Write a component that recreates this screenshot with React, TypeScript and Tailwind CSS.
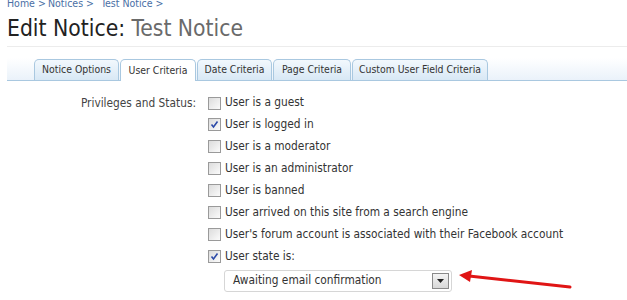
import React from "react";

const options = [
  { label: "User is a guest", checked: false },
  { label: "User is logged in", checked: true },
  { label: "User is a moderator", checked: false },
  { label: "User is an administrator", checked: false },
  { label: "User is banned", checked: false },
  { label: "User arrived on this site from a search engine", checked: false },
  { label: "User's forum account is associated with their Facebook account", checked: false },
  { label: "User state is:", checked: true },
];

const tabs = [
  { label: "Notice Options", w: "w-[85px]" },
  { label: "User Criteria", w: "w-[76px]" },
  { label: "Date Criteria", w: "w-[75px]" },
  { label: "Page Criteria", w: "w-[78px]" },
  { label: "Custom User Field Criteria", w: "w-[136px]" },
];

const CheckBox = ({ checked }: { checked: boolean }) => (
  <span className="w-[13px] h-[13px] shrink-0 border border-[#9a9a9a] bg-gradient-to-br from-[#dcdcdc] to-[#fbfbfb] flex items-center justify-center">
    {checked && (
      <svg width="9" height="9" viewBox="0 0 9 9">
        <path d="M1.5 4.5 L3.5 7 L7.5 1.5" fill="none" stroke="#2c4aa8" strokeWidth="1.6" />
      </svg>
    )}
  </span>
);

export default function App() {
  return (
    <div
      className="relative w-[627px] h-[300px] overflow-hidden bg-white text-[#333]"
      style={{ fontFamily: "'DejaVu Sans Condensed', 'DejaVu Sans', sans-serif" }}
    >
      <div className="pl-[7px] mt-[-3px] text-[10.5px] leading-[13px] text-[#4a6fa5] flex">
        <span className="w-[41px]">Home &gt;</span>
        <span className="w-[53px]">Notices &gt;</span>
        <span>Test Notice &gt;</span>
      </div>

      <h1 className="pl-[7px] mt-[4px] text-[22.7px] leading-[28px] text-[#222]">
        Edit Notice: <span className="text-[#6a6a6a]">Test Notice</span>
      </h1>

      <div className="ml-[7px] mt-[4px] h-px bg-[#ececec]" />

      <div className="ml-[7px] mt-[11px] h-[23px] pl-[27px] flex items-end gap-[1px] border-b border-[#a9c8e0] bg-gradient-to-b from-white to-[#eaf2fa]">
        {tabs.map((t) => (
          <div
            key={t.label}
            className={
              t.label === "User Criteria"
                ? `${t.w} h-[22px] mb-[-1px] flex items-center justify-center text-[10.4px] text-[#333] bg-white border border-b-0 border-[#a9c8e0] rounded-t-[5px]`
                : `${t.w} h-[21px] flex items-center justify-center text-[10.4px] text-[#333] bg-gradient-to-b from-[#f2f8fd] to-[#d8e8f5] border border-b-0 border-[#a9c8e0] rounded-t-[5px]`
            }
          >
            {t.label}
          </div>
        ))}
      </div>

      <div className="mt-[14px] flex">
        <div className="w-[196px] text-right text-[11.8px] leading-[16px] text-[#444]">
          Privileges and Status:
        </div>
        <div className="flex flex-col gap-[5.95px] pl-[12px]">
          {options.map((o) => (
            <label key={o.label} className="flex items-center gap-[4px] h-[16px] text-[11.8px] text-[#333]">
              <CheckBox checked={o.checked} />
              <span>{o.label}</span>
            </label>
          ))}
          <div className="ml-[16px] mt-[-1px] w-[228px] h-[22px] border border-[#d6d6d6] rounded-[3px] flex items-center justify-between pl-[8px] pr-[2px] text-[11.8px] text-[#333]">
            <span>Awaiting email confirmation</span>
            <span className="w-[17px] h-[16px] border border-[#8a8a8a] bg-gradient-to-b from-[#f4f4f4] to-[#d8d8d8] flex items-center justify-center">
              <svg width="7" height="4" viewBox="0 0 7 4">
                <path d="M0 0 H7 L3.5 4 Z" fill="#222" />
              </svg>
            </span>
          </div>
        </div>
      </div>

      <svg className="absolute left-[455px] top-[266px]" width="120" height="26" viewBox="0 0 120 26">
        <path d="M115 21 L14 10" stroke="#e01515" strokeWidth="3" strokeLinecap="round" />
        <path d="M4 9 L17 4 L15 16 Z" fill="#e01515" />
      </svg>
    </div>
  );
}
